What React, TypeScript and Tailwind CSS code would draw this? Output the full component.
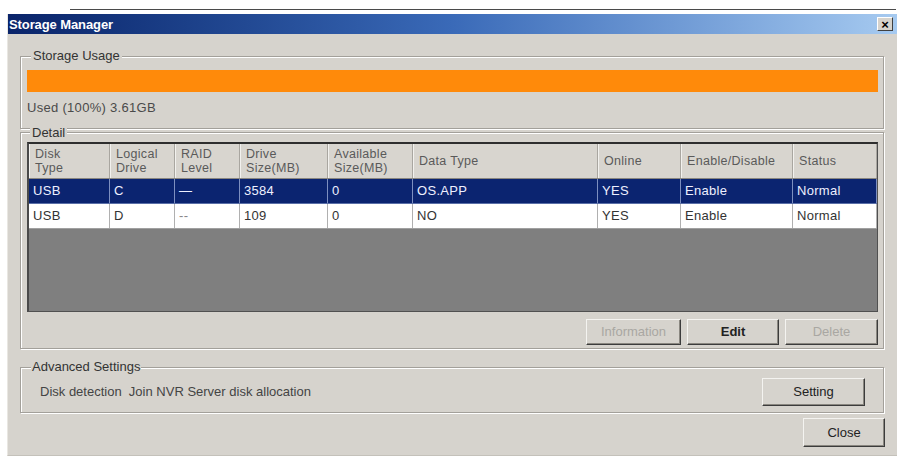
import React from "react";

const cols = "grid grid-cols-[81px_65px_65px_88px_85px_185px_83px_112px_1fr]";

function WinButton({ children, className = "", disabled = false, bold = false }: { children: React.ReactNode; className?: string; disabled?: boolean; bold?: boolean }) {
  return (
    <button
      className={`flex items-center justify-center bg-[#d6d3cd] border border-t-[#f4f3f0] border-l-[#f4f3f0] border-r-[#3c3c3c] border-b-[#3c3c3c] shadow-[inset_-1px_-1px_0_#8a8780] text-[13px] ${bold ? "font-bold" : ""} ${disabled ? "text-[#a9a7a2]" : "text-[#222]"} ${className}`}
    >
      {children}
    </button>
  );
}

const headers = [
  ["Disk", "Type"],
  ["Logical", "Drive"],
  ["RAID", "Level"],
  ["Drive", "Size(MB)"],
  ["Available", "Size(MB)"],
  ["Data Type"],
  ["Online"],
  ["Enable/Disable"],
  ["Status"],
];

const rows = [
  ["USB", "C", "—", "3584", "0", "OS.APP", "YES", "Enable", "Normal"],
  ["USB", "D", "--", "109", "0", "NO", "YES", "Enable", "Normal"],
];

export default function App() {
  return (
    <div className="w-[901px] h-[459px] bg-white overflow-hidden font-['Liberation_Sans',Arial,sans-serif] text-[#333]">
      <div className="h-[14px] pt-[9px]">
        <div className="ml-[70px] w-[826px] h-[1px] bg-[#4a4a4a]" />
      </div>
      <div className="ml-[7px] w-[890px] h-[442px] bg-[#d6d3cd] border-l border-[#e9e7e2] border-b border-b-[#c4c1ba] flex flex-col">
        {/* Title bar */}
        <div className="h-[20px] bg-linear-to-r from-[#0a246a] via-[#3a6ab8] to-[#a6caf0] flex items-center justify-between pl-[1px] pr-[4px]">
          <span className="text-white font-bold text-[13px] leading-none tracking-[-0.1px]">Storage Manager</span>
          <div className="w-[16px] h-[14px] bg-[#d6d3cd] border border-t-white border-l-white border-r-[#404040] border-b-[#404040] flex items-center justify-center text-[13px] font-bold leading-none text-black">
            ×
          </div>
        </div>

        <div className="pl-[12px]">
          {/* Storage Usage */}
          <fieldset className="mt-[15px] w-[864px] border border-[#a3a09a] shadow-[1px_1px_0_#fff,inset_1px_1px_0_#fff] pl-[6px] pr-[5px] pb-[13px]">
            <legend className="ml-[4px] px-[2px] text-[13px] leading-[14px] bg-[#d6d3cd] text-[#333]">Storage Usage</legend>
            <div className="mt-[7px] h-[22px] bg-[#ff8a0a]" />
            <div className="mt-[8px] text-[13px] leading-[15px] tracking-[0.3px] text-[#4a4a4a]">Used (100%) 3.61GB</div>
          </fieldset>

          {/* Detail */}
          <fieldset className="-mt-[4px] w-[864px] border border-[#a3a09a] shadow-[1px_1px_0_#fff,inset_1px_1px_0_#fff] pl-[6px] pr-[5px] pb-[3px]">
            <legend className="ml-[3px] px-[2px] text-[13px] leading-[15px] bg-[#d6d3cd] text-[#333]">Detail</legend>
            <div className="mt-[2px] h-[170px] flex flex-col border-t-2 border-l-2 border-r border-b border-t-[#2e2e2e] border-l-[#4a4a4a] border-r-[#505050] border-b-[#505050] bg-[#7f7f7f]">
              <div className={`${cols} h-[35px] bg-[#d8d5cf] border-b border-[#8a8780]`}>
                {headers.map((h, i) => (
                  <div key={i} className="flex flex-col justify-center pl-[6px] border-r border-[#a9a6a0] shadow-[inset_1px_0_0_#f2f1ee] text-[12.5px] leading-[14px] tracking-[0.3px] text-[#5a5a5a]">
                    {h.map((l, j) => (
                      <span key={j}>{l}</span>
                    ))}
                  </div>
                ))}
              </div>
              {rows.map((r, ri) => (
                <div
                  key={ri}
                  className={`${cols} h-[25px] border-b ${ri === 0 ? "bg-[#0b2470] text-[#eef0ff] border-[#5a6fa8]" : "bg-white text-[#333] border-[#a0a0a0]"}`}
                >
                  {r.map((c, ci) => (
                    <div
                      key={ci}
                      className={`flex items-center pl-[4px] text-[13px] tracking-[0.3px] border-r ${ri === 0 ? "border-[#7d8fc0]" : "border-[#b0b0b0]"} ${ci === 2 && ri === 1 ? "text-[#888]" : ""}`}
                    >
                      {c}
                    </div>
                  ))}
                </div>
              ))}
              <div className="flex-1 bg-[#7f7f7f]" />
            </div>
            <div className="mt-[7px] flex justify-end gap-[6px]">
              <WinButton disabled className="w-[95px] h-[26px]">Information</WinButton>
              <WinButton bold className="w-[92px] h-[26px]">Edit</WinButton>
              <WinButton disabled className="w-[93px] h-[26px]">Delete</WinButton>
            </div>
          </fieldset>

          {/* Advanced Settings */}
          <fieldset className="mt-[11px] w-[864px] border border-[#a3a09a] shadow-[1px_1px_0_#fff,inset_1px_1px_0_#fff] pl-[6px] pr-[18px] pb-[6px]">
            <legend className="ml-[4px] px-[1px] text-[13px] leading-[14px] bg-[#d6d3cd] text-[#333]">Advanced Settings</legend>
            <div className="mt-[4px] flex items-center justify-between">
              <span className="pl-[13px] text-[13px] text-[#444]">Disk detection&nbsp; Join NVR Server disk allocation</span>
              <WinButton className="w-[103px] h-[28px]">Setting</WinButton>
            </div>
          </fieldset>
        </div>

        <div className="mt-[5px] flex justify-end pr-[12px]">
          <WinButton className="w-[82px] h-[29px]">Close</WinButton>
        </div>
      </div>
    </div>
  );
}
